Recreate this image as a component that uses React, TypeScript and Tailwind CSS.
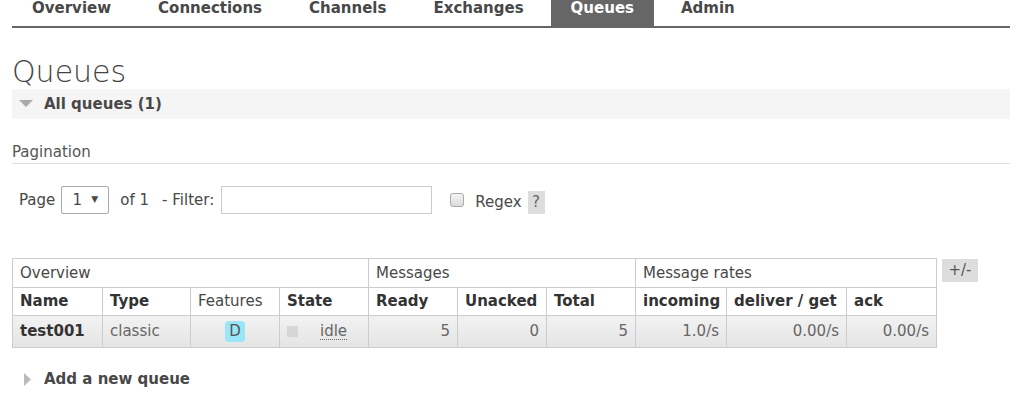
import { useState } from "react";

const tabs = ["Overview", "Connections", "Channels", "Exchanges", "Queues", "Admin"];

const Cell = ({
  children,
  className = "",
  span,
}: {
  children?: React.ReactNode;
  className?: string;
  span?: number;
}) => (
  <td colSpan={span} className={`border border-[#cccccc] px-[7px] ${className}`}>
    {children}
  </td>
);

export default function App() {
  const [filter, setFilter] = useState("");

  return (
    <div className="h-[396px] w-[1010px] overflow-hidden bg-white font-['DejaVu_Sans',Verdana,sans-serif] text-[#484848]">
      {/* top navigation */}
      <nav className="ml-3 flex h-[28px] gap-[7px] border-b-2 border-[#666666]">
        {tabs.map((t) => (
          <div
            key={t}
            className={`h-[26px] px-5 text-[15px] font-bold leading-4 ${
              t === "Queues" ? "bg-[#666666] text-white" : "text-[#484848]"
            }`}
          >
            {t}
          </div>
        ))}
      </nav>

      <div className="pl-3">
        <h1 className="mt-[26px] text-[30px] font-light leading-[35px] text-[#444444]">Queues</h1>

        {/* section header */}
        <div className="flex h-[30px] items-center bg-[#f5f5f5] pl-[7px]">
          <svg width="14" height="8" viewBox="0 0 14 8">
            <path d="M0 0h14L7 7z" fill="#aaaaaa" />
          </svg>
          <span className="ml-[11px] text-[15px] font-bold text-[#484848]">All queues (1)</span>
        </div>

        <div className="mt-[24px] border-b border-[#dddddd] pb-[2px] text-[15px] leading-[18px] text-[#555555]">
          Pagination
        </div>

        {/* pagination / filter row */}
        <div className="mt-[22px] flex h-[28px] items-center text-[15px] text-[#484848]">
          <span className="ml-[7px]">Page</span>
          <div className="ml-[6px] flex h-[28px] w-[48px] items-center justify-center gap-[9px] rounded-[2px] border border-[#aaaaaa] bg-white">
            <span>1</span>
            <span className="text-[9px]">▼</span>
          </div>
          <span className="ml-[11px]">of 1</span>
          <span className="ml-[13px]">- Filter:</span>
          <input
            value={filter}
            onChange={(e) => setFilter(e.target.value)}
            className="ml-[7px] h-[28px] w-[211px] border border-[#cccccc] bg-white outline-none"
          />
          <span className="ml-[18px] h-[14px] w-[14px] rounded-[3px] border border-[#aaaaaa] bg-gradient-to-b from-[#f4f4f4] to-[#dcdcdc]" />
          <span className="ml-[11px] mt-[5px]">Regex</span>
          <span className="ml-[6px] mt-[5px] flex h-[23px] w-[17px] items-center justify-center bg-[#dddddd] text-[15px] text-[#666666]">
            ?
          </span>
        </div>

        {/* queues table */}
        <div className="mt-[44px] flex items-start">
          <table className="w-[924px] table-fixed border-collapse text-[15px]">
            <colgroup>
              <col className="w-[90px]" />
              <col className="w-[88px]" />
              <col className="w-[89px]" />
              <col className="w-[89px]" />
              <col className="w-[89px]" />
              <col className="w-[89px]" />
              <col className="w-[89px]" />
              <col className="w-[91px]" />
              <col className="w-[120px]" />
              <col className="w-[90px]" />
            </colgroup>
            <tbody>
              <tr className="h-[29px] text-left text-[#484848]">
                <Cell span={4}>Overview</Cell>
                <Cell span={3}>Messages</Cell>
                <Cell span={3}>Message rates</Cell>
              </tr>
              <tr className="h-[28px] font-bold text-[#333333]">
                <Cell>Name</Cell>
                <Cell>Type</Cell>
                <Cell className="font-normal text-[#484848]">Features</Cell>
                <Cell>State</Cell>
                <Cell>Ready</Cell>
                <Cell>Unacked</Cell>
                <Cell>Total</Cell>
                <Cell>incoming</Cell>
                <Cell>deliver / get</Cell>
                <Cell>ack</Cell>
              </tr>
              <tr className="h-[32px] bg-gradient-to-b from-[#f2f2f2] to-[#e4e4e4] text-[#666666]">
                <Cell className="font-bold text-[#333333]">test001</Cell>
                <Cell>classic</Cell>
                <Cell className="text-center">
                  <span className="inline-flex h-[21px] w-[20px] items-center justify-center rounded-[4px] bg-[#99e6f7] text-[#555555]">
                    D
                  </span>
                </Cell>
                <Cell>
                  <div className="flex items-center">
                    <span className="h-[11px] w-[11px] bg-[#d6d6d6]" />
                    <span className="ml-[22px] border-b border-dotted border-[#666666] leading-4">idle</span>
                  </div>
                </Cell>
                <Cell className="text-right">5</Cell>
                <Cell className="text-right">0</Cell>
                <Cell className="text-right">5</Cell>
                <Cell className="text-right">1.0/s</Cell>
                <Cell className="text-right">0.00/s</Cell>
                <Cell className="text-right">0.00/s</Cell>
              </tr>
            </tbody>
          </table>
          <span className="ml-[5px] mt-px flex h-[23px] w-[36px] items-center justify-center bg-[#dddddd] text-[15px] text-[#555555]">
            +/-
          </span>
        </div>

        {/* add queue */}
        <div className="mt-[22px] flex items-center pl-3 text-[15px] font-bold leading-[18px] text-[#484848]">
          <svg width="7" height="13" viewBox="0 0 7 13">
            <path d="M0 0l7 6.5L0 13z" fill="#bbbbbb" />
          </svg>
          <span className="ml-[13px]">Add a new queue</span>
        </div>
      </div>
    </div>
  );
}
